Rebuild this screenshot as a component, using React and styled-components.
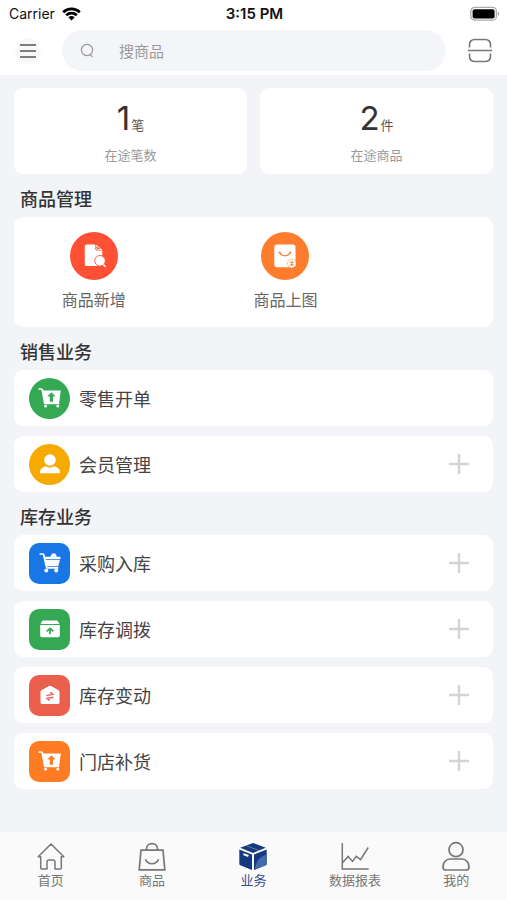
import React from "react";
import styled, { createGlobalStyle } from "styled-components";

const GlobalStyle = createGlobalStyle`
  * { box-sizing: border-box; }
  body {
    margin: 0;
    background: #f2f4f8;
    color: #333;
    font-family: "Noto Sans CJK SC", sans-serif;
  }
  button, input { font: inherit; color: inherit; }
`;

const Page = styled.div`
  display: flex;
  flex-direction: column;
  min-height: 100vh;
`;

const Header = styled.header`
  background: #fff;
  padding-bottom: 4px;
`;

const StatusBar = styled.div`
  display: grid;
  grid-template-columns: 1fr auto 1fr;
  align-items: center;
  height: 30px;
  padding: 0 7px 3px 9px;
  font-family: Inter, sans-serif;
  font-size: 14px;
  color: #111;
`;

const Carrier = styled.div`
  display: flex;
  align-items: center;
  gap: 7px;
`;

const Clock = styled.time`
  font-size: 15px;
  font-weight: 600;
`;

const BatterySlot = styled.div`
  display: flex;
  justify-content: flex-end;
`;

const SearchBar = styled.div`
  display: flex;
  align-items: center;
  padding: 0 14px 0 15px;
`;

const IconButton = styled.button`
  display: grid;
  place-items: center;
  width: 26px;
  height: 26px;
  padding: 0;
  border: 0;
  border-radius: 50%;
  background: ${(p) => (p.$tinted ? "#f8f8f9" : "transparent")};
`;

const SearchField = styled.label`
  flex: 1;
  display: flex;
  align-items: center;
  gap: 24px;
  min-width: 0;
  height: 41px;
  margin: 0 21px;
  padding: 0 18px;
  border-radius: 21px;
  background: #f4f5f8;
`;

const SearchInput = styled.input`
  flex: 1;
  min-width: 0;
  padding: 0;
  border: 0;
  outline: 0;
  background: transparent;
  font-size: 15px;
  line-height: 20px;
  &::placeholder { color: #999; opacity: 1; }
`;

const Main = styled.main`
  flex: 1;
  padding: 13px 14px 40px;
`;

const Stats = styled.div`
  display: grid;
  grid-template-columns: 1fr 1fr;
  gap: 13px;
`;

const Card = styled.div`
  border-radius: 9px;
  background: #fff;
`;

const StatCard = styled(Card)`
  display: flex;
  flex-direction: column;
  align-items: center;
  height: 86px;
  padding-top: 10px;
`;

const StatValue = styled.div`
  display: flex;
  align-items: baseline;
  gap: 1px;
  font-family: Inter, "Noto Sans CJK SC", sans-serif;
  font-size: 33px;
  line-height: 40px;
`;

const StatUnit = styled.span`
  font-size: 13px;
  line-height: 20px;
  color: #555;
`;

const StatLabel = styled.div`
  margin-top: 7px;
  font-size: 13px;
  line-height: 20px;
  color: #999;
`;

const SectionTitle = styled.h2`
  margin: 0;
  padding: 12px 6px 7px;
  font-size: 18px;
  line-height: 24px;
  font-weight: 500;
`;

const Shortcuts = styled(Card)`
  display: grid;
  grid-template-columns: repeat(5, 1fr);
  height: 110px;
  padding-top: 15px;
`;

const Shortcut = styled.button`
  grid-column: span 2;
  display: flex;
  flex-direction: column;
  align-items: center;
  gap: 7px;
  padding: 0;
  border: 0;
  background: none;
  margin-right: 32px;
  color: #666;
  font-size: 16px;
  line-height: 24px;
`;

const Badge = styled.span`
  display: grid;
  place-items: center;
  flex: none;
  width: ${(p) => p.$size}px;
  height: ${(p) => p.$size}px;
  border-radius: ${(p) => (p.$round ? "50%" : "10px")};
  background: ${(p) => p.$color};
`;

const RowList = styled.ul`
  display: flex;
  flex-direction: column;
  gap: 10px;
  margin: 0;
  padding: 0;
  list-style: none;
`;

const Row = styled.li`
  display: flex;
  align-items: center;
  height: 56px;
  padding: 0 21px 0 15px;
  border-radius: 9px;
  background: #fff;
`;

const RowLink = styled.a`
  flex: 1;
  display: flex;
  align-items: center;
  gap: 9px;
  color: #444;
  font-size: 18px;
  line-height: 24px;
  text-decoration: none;
`;

const TabBar = styled.nav`
  display: grid;
  grid-template-columns: repeat(5, 1fr);
  height: 68px;
  background: #fafafa;
`;

const Tab = styled.a`
  display: flex;
  flex-direction: column;
  align-items: center;
  padding-top: 9px;
  color: ${(p) => (p.$active ? "#3a4a94" : "#777")};
  font-size: 13px;
  line-height: 16px;
  text-decoration: none;
`;

const Wifi = () => (
  <svg width="19" height="14" viewBox="0 0 19 14" fill="none" stroke="#000" strokeWidth="2.7" aria-hidden="true">
    <path d="M1.2 5.2C5.8.8 13.2.8 17.8 5.2M4.2 8.2C7.2 5.4 11.8 5.4 14.8 8.2" />
    <path d="M6.4 10.3c1.8-1.6 4.4-1.6 6.2 0L9.5 13.5Z" fill="#000" stroke="none" />
  </svg>
);

const Battery = () => (
  <svg width="30" height="16" viewBox="0 0 30 16" aria-hidden="true">
    <rect x=".8" y="1.4" width="25.6" height="12.8" rx="4" fill="#fff" stroke="#aaa" strokeWidth="1.3" />
    <rect x="2.6" y="3.2" width="22" height="9.2" rx="2" fill="#000" />
    <path d="M27.8 5.7c2 .7 2 3.5 0 4.2Z" fill="#aaa" />
  </svg>
);

const Menu = () => (
  <svg width="18" height="16" viewBox="0 0 18 16" stroke="#555" strokeWidth="1.7" aria-hidden="true">
    <path d="M1 2h16M1 8h16M1 14h16" />
  </svg>
);

const Search = () => (
  <svg width="15" height="16" viewBox="0 0 15 16" fill="none" stroke="#999" strokeWidth="1.2" aria-hidden="true">
    <circle cx="7" cy="7" r="5.6" />
    <path d="m10 11.4 2.6 2.8" />
  </svg>
);

const Scan = () => (
  <svg width="26" height="26" viewBox="0 0 26 26" fill="none" stroke="#777" strokeWidth="1.6" aria-hidden="true">
    <path d="M2.5 9.4V7q0-5.5 5.5-5.5h10q5.5 0 5.5 5.5v2.4M2.5 15.6V18q0 5.5 5.5 5.5h10q5.5 0 5.5-5.5v-2.4M.8 12.5h24.4" />
  </svg>
);

const FileSearch = () => (
  <svg width="24" height="24" viewBox="0 0 24 24" aria-hidden="true">
    <path d="M4.9.6H13v3.2q0 2.8 2.8 2.8h4.5v13.9q0 1.6-1.6 1.6H4.9q-2.1 0-2.1-2.2V2.8Q2.8.6 4.9.6Z" fill="#fff" />
    <path d="M14 1.2 19.6 5.6h-3.3q-2.3 0-2.3-2.2Z" fill="#ff5036" stroke="#fff" strokeWidth=".9" />
    <circle cx="18" cy="16.8" r="5.3" fill="#fff" stroke="#ff5036" strokeWidth=".9" />
    <path d="m21.4 20.6 2.2 2.4" stroke="#fff" strokeWidth="1.5" />
  </svg>
);

const BagPhoto = () => (
  <svg width="24" height="24" viewBox="0 0 24 24" fill="none" aria-hidden="true">
    <rect x="1.3" y=".4" width="21.2" height="22.8" rx="3" fill="#fff" />
    <path d="M6.7 8.2c1.5 4.8 9.1 4.8 10.6 0" stroke="#fd7c2d" strokeWidth="1.3" />
    <circle cx="6.6" cy="8.5" r="1" fill="#fd7c2d" />
    <circle cx="17.4" cy="8.5" r="1" fill="#fd7c2d" />
    <circle cx="18.8" cy="19.5" r="4.4" fill="#fff" stroke="#fd7c2d" strokeWidth=".8" strokeDasharray="1.5 1" />
    <path d="M16.7 18.3h4.2M16.7 20.8h4.2M18.8 17v5" stroke="#fd7c2d" strokeWidth=".9" />
  </svg>
);

const CartUp = ({ color }) => (
  <svg width="24" height="22" viewBox="0 0 24 22" aria-hidden="true">
    <path d="M1.2 2h2.2q.8 0 1 1l2.3 13.4h13.8" fill="none" stroke="#fff" strokeWidth="1.7" strokeLinecap="round" strokeLinejoin="round" />
    <path d="M4.4 3.4h18.4L21 17H6.7Z" fill="#fff" />
    <circle cx="7.6" cy="19.2" r="1.4" fill="#fff" />
    <circle cx="19.8" cy="19.2" r="1.4" fill="#fff" />
    <path d="m13.4 5.2 4.2 4.4H15v5.2h-3.2V9.6H9.2Z" fill={color} />
  </svg>
);

const Person = () => (
  <svg width="22" height="22" viewBox="0 0 22 22" fill="#fff" aria-hidden="true">
    <circle cx="11" cy="7" r="5.8" />
    <path d="M1 20.2v-1.8q0-3.2 5.6-5.2 4.4 2.5 8.8 0 5.6 2 5.6 5.2v1.8Z" />
  </svg>
);

const Cart = () => (
  <svg width="22" height="22" viewBox="0 0 22 22" fill="#fff" aria-hidden="true">
    <path d="M1.2 2h2.6q.7 0 .9.8L7.5 15q.2.8 1 .8h10.3" fill="none" stroke="#fff" strokeWidth="1.7" strokeLinecap="round" />
    <path d="M4.7 4.8h6.9q.5-3.2 3-3.6 2.7.2 3.1 3.6H21q.6 0 .5.7l-.4 1.8H5.3Z" />
    <path d="M5.4 7.9h15.5l-1.4 5.6q-.2.8-1 .8H7.1Z" />
    <circle cx="7.3" cy="18.6" r="2" />
    <circle cx="17.2" cy="18.6" r="2" />
  </svg>
);

const BoxUp = () => (
  <svg width="22" height="20" viewBox="0 0 22 20" fill="none" aria-hidden="true">
    <path d="M4.3 1.4h13.4q.9 0 1.3.8l1.4 2.8H1.6L3 2.2q.4-.8 1.3-.8Z" fill="#fff" />
    <path d="M1.2 6h19.6v10.4q0 1.8-1.8 1.8H3q-1.8 0-1.8-1.8Z" fill="#fff" />
    <path d="M11 15.2V9.4m-3.3 3L11 9.3l3.3 3.1" stroke="#35a853" strokeWidth="1.7" />
  </svg>
);

const HouseSwap = () => (
  <svg width="22" height="22" viewBox="0 0 22 22" fill="none" aria-hidden="true">
    <path d="M10 2q1-.6 2 0l7.6 4.3q.9.5.9 1.5v10.6q0 1.7-1.7 1.7H3.2q-1.7 0-1.7-1.7V7.8q0-1 .9-1.5Z" fill="#fff" />
    <path d="M7.4 11.6l6.4-1.2-2.6-2M14.4 13.2 8 14.4l2.6 2" stroke="#eb5f4d" strokeWidth="1.4" />
  </svg>
);

const Plus = () => (
  <svg width="22" height="22" viewBox="0 0 22 22" stroke="#d4d4d4" strokeWidth="2.4" aria-hidden="true">
    <path d="M11 1v20M1 11h20" />
  </svg>
);

const tabIcon = { width: 30, height: 31, viewBox: "0 0 30 31", fill: "none", stroke: "#777", strokeWidth: 1.5, "aria-hidden": true };

const HomeIcon = () => (
  <svg {...tabIcon} strokeLinejoin="round" strokeLinecap="round">
    <path d="M2.2 15.7 15 3l12.8 12.7h-2.5v11.1q0 1.2-1.2 1.2H19v-7q0-2-2-2h-4q-2 0-2 2v7H5.9q-1.2 0-1.2-1.2V15.7Z" />
  </svg>
);

const BagIcon = () => (
  <svg {...tabIcon} strokeWidth="1.7">
    <path d="M4 9.2h22l1.8 19.6H2.2ZM9.5 9V7.8C9.5.8 20.5.8 20.5 7.8V9M8.4 18.4c2.8 5.8 10.4 5.8 13.2 0" />
  </svg>
);

const CubeIcon = () => (
  <svg {...tabIcon} stroke="none">
    <path d="M15 1.9 27.8 6.8 15 12 2.2 6.8Z" fill="#153a80" />
    <path d="M1.3 8.5 14 13.4V29L2.3 24.2q-1-.4-1-1.5Z" fill="#153a80" />
    <path d="M28.7 8.5 16 13.4V29l11.7-4.8q1-.4 1-1.5Z" fill="#153a80" />
    <path d="M28.7 13.5C22 15.5 18 20 16.7 28.7l11-4.5q1-.4 1-1.5Z" fill="#4568aa" />
    <path d="m5.4 13.2 5 1.8" stroke="#fff" strokeWidth="1.9" />
    <path d="m8.4 4.7 12.6 4.9" stroke="#8fa3cc" strokeWidth=".6" />
  </svg>
);

const ChartIcon = () => (
  <svg {...tabIcon}>
    <path d="M2.3 2v26h26.4M2.5 21.8l5.7-6.4 4.4 5 3.7-5 4.3 3.2L28.2 6.5" />
  </svg>
);

const ProfileIcon = () => (
  <svg {...tabIcon} strokeWidth="1.7">
    <circle cx="15" cy="8.7" r="7" />
    <path d="M9 18h12c4.5 0 7 4 7 8.2 0 1.9-1 2.8-2.8 2.8H4.8C3 29 2 28.1 2 26.2 2 22 4.5 18 9 18Z" />
  </svg>
);

const stats = [
  { value: 1, unit: "笔", label: "在途笔数" },
  { value: 2, unit: "件", label: "在途商品" },
];

const shortcuts = [
  { label: "商品新增", color: "#ff5036", icon: <FileSearch /> },
  { label: "商品上图", color: "#fd7c2d", icon: <BagPhoto /> },
];

const sections = [
  {
    title: "销售业务",
    round: true,
    rows: [
      { label: "零售开单", color: "#35a853", icon: <CartUp color="#35a853" /> },
      { label: "会员管理", color: "#f6aa00", icon: <Person />, add: true },
    ],
  },
  {
    title: "库存业务",
    rows: [
      { label: "采购入库", color: "#1976e5", icon: <Cart />, add: true },
      { label: "库存调拨", color: "#35a853", icon: <BoxUp />, add: true },
      { label: "库存变动", color: "#eb5f4d", icon: <HouseSwap />, add: true },
      { label: "门店补货", color: "#ff7c24", icon: <CartUp color="#ff7c24" />, add: true },
    ],
  },
];

const tabs = [
  { label: "首页", icon: <HomeIcon /> },
  { label: "商品", icon: <BagIcon /> },
  { label: "业务", icon: <CubeIcon />, active: true },
  { label: "数据报表", icon: <ChartIcon /> },
  { label: "我的", icon: <ProfileIcon /> },
];

export default function App() {
  return (
    <Page>
      <GlobalStyle />
      <Header>
        <StatusBar>
          <Carrier>Carrier <Wifi /></Carrier>
          <Clock>3:15 PM</Clock>
          <BatterySlot><Battery /></BatterySlot>
        </StatusBar>
        <SearchBar>
          <IconButton $tinted aria-label="菜单"><Menu /></IconButton>
          <SearchField>
            <Search />
            <SearchInput type="search" aria-label="搜商品" placeholder="搜商品" />
          </SearchField>
          <IconButton aria-label="扫码"><Scan /></IconButton>
        </SearchBar>
      </Header>
      <Main>
        <Stats>
          {stats.map((s) => (
            <StatCard key={s.label}>
              <StatValue>{s.value}<StatUnit>{s.unit}</StatUnit></StatValue>
              <StatLabel>{s.label}</StatLabel>
            </StatCard>
          ))}
        </Stats>
        <SectionTitle>商品管理</SectionTitle>
        <Shortcuts>
          {shortcuts.map((s) => (
            <Shortcut key={s.label}>
              <Badge $size={48} $round $color={s.color}>{s.icon}</Badge>
              {s.label}
            </Shortcut>
          ))}
        </Shortcuts>
        {sections.map((section) => (
          <section key={section.title}>
            <SectionTitle>{section.title}</SectionTitle>
            <RowList>
              {section.rows.map((r) => (
                <Row key={r.label}>
                  <RowLink href="#">
                    <Badge $size={41} $round={section.round} $color={r.color}>{r.icon}</Badge>
                    {r.label}
                  </RowLink>
                  {r.add && <IconButton aria-label={`新增${r.label}`}><Plus /></IconButton>}
                </Row>
              ))}
            </RowList>
          </section>
        ))}
      </Main>
      <TabBar>
        {tabs.map((t) => (
          <Tab key={t.label} href="#" $active={t.active} aria-current={t.active ? "page" : undefined}>
            {t.icon}
            {t.label}
          </Tab>
        ))}
      </TabBar>
    </Page>
  );
}
